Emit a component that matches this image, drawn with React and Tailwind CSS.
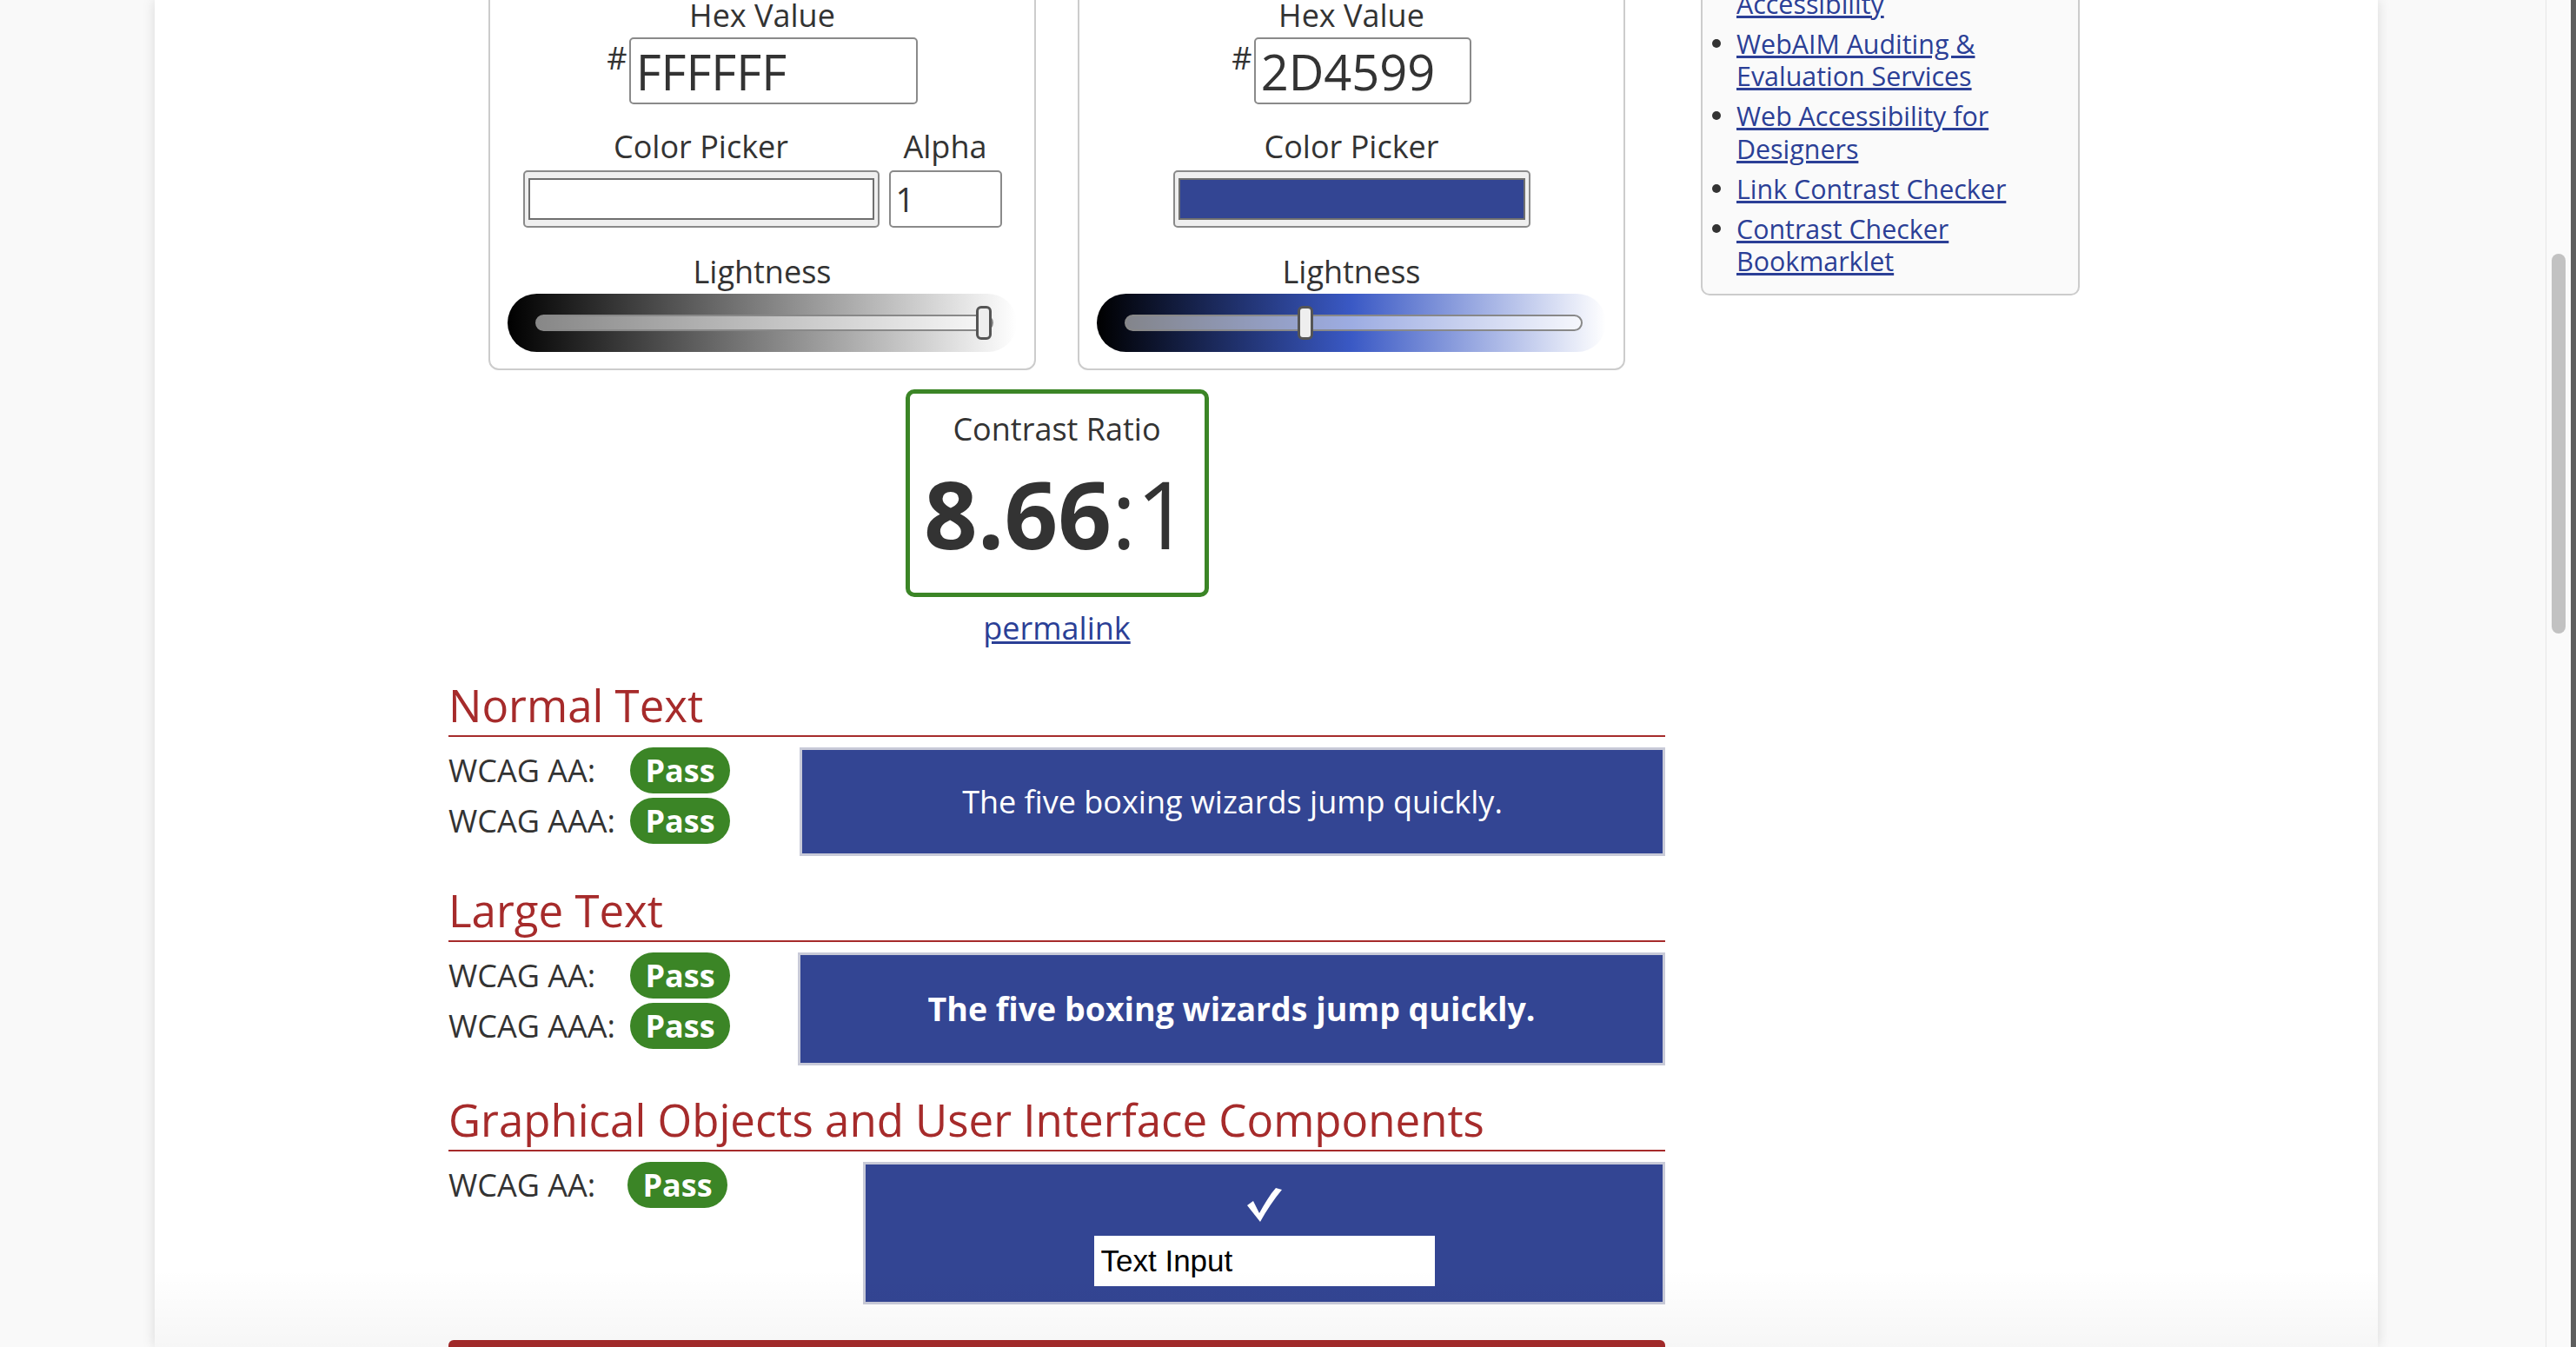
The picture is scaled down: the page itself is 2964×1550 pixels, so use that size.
import React from 'react';

const links = [
  'Contrast and Color Accessibility',
  'WebAIM Auditing & Evaluation Services',
  'Web Accessibility for Designers',
  'Link Contrast Checker',
  'Contrast Checker Bookmarklet',
];

const Slider = ({ gradient, lightness }) => (
  <div className={`relative mt-[1px] h-[67px] w-[586px] rounded-full pl-[32px] pr-[27px] pt-[24px] ${gradient}`}>
    <div className="h-[19px] rounded-full border-2 border-[#888] bg-white/50" />
    <div
      className="absolute top-[14px] h-[39px] w-[18px] rounded-[6px] border-[3px] border-[#555] bg-[#eee]"
      style={{ left: 36 + lightness * 503 }}
    />
  </div>
);

const ColorCard = ({ hex, hexWidth, pickerWidth, swatch, alpha, gradient, lightness }) => (
  <div className="flex w-[630px] flex-col items-center rounded-[12px] border-2 border-[#ccc] bg-white pb-[19px] pt-[22px]">
    <div className="text-[36px] leading-[48px]">Hex Value</div>
    <div className="mt-[1px] flex items-start">
      <span className="text-[36px] leading-[48px]">#</span>
      <input
        readOnly
        value={hex}
        className={`ml-[2px] h-[77px] ${hexWidth} rounded-[5px] border-2 border-[#8a8a8a] bg-white pl-[6px] text-[56px] leading-none text-[#333] outline-none`}
      />
    </div>
    <div className="mt-[25px] flex gap-[11px]">
      <div className="flex flex-col items-center">
        <div className="text-[36px] leading-[48px]">Color Picker</div>
        <div className={`mt-[3px] h-[66px] ${pickerWidth} rounded-[5px] border-2 border-[#8a8a8a] bg-[#efefef] px-[4px] py-[7px]`}>
          <div className={`h-full border-2 border-[#6f6f6f] ${swatch}`} />
        </div>
      </div>
      {alpha && (
        <div className="flex flex-col items-center">
          <div className="text-[36px] leading-[48px]">Alpha</div>
          <input
            readOnly
            value="1"
            className="mt-[3px] h-[66px] w-[130px] rounded-[5px] border-2 border-[#8a8a8a] bg-white pl-[6px] text-[38px] text-[#333] outline-none"
          />
        </div>
      )}
    </div>
    <div className="mt-[27px] text-[36px] leading-[48px]">Lightness</div>
    <Slider gradient={gradient} lightness={lightness} />
  </div>
);

const Badge = () => (
  <span className="h-[53px] w-[115px] rounded-full bg-[#3b8526] text-center text-[36px] font-bold leading-[53px] text-white">
    Pass
  </span>
);

const Section = ({ title, rows, leftWidth, labelWidth, first, children }) => (
  <div className={first ? 'mt-[34px]' : 'mt-[32px]'}>
    <h2 className="border-b-2 border-[#a62b2b] pb-[5px] text-[51px] leading-[60px] text-[#a62b2b]">{title}</h2>
    <div className="mt-[12px] flex">
      <div className={`flex shrink-0 flex-col gap-[5px] ${leftWidth}`}>
        {rows.map((r) => (
          <div key={r} className="flex h-[53px] items-center">
            <span className={`${labelWidth} text-[36px]`}>{r}</span>
            <Badge />
          </div>
        ))}
      </div>
      {children}
    </div>
  </div>
);

export default function App() {
  return (
    <div className="flex h-[1550px] overflow-hidden bg-[#f9f9f9] font-['Open_Sans',sans-serif] text-[#333]">
      <div className="w-[2929px] shrink-0">
        <div className="relative ml-[178px] h-full w-[2558px] overflow-hidden bg-white shadow-[0_0_14px_rgba(0,0,0,0.13)]">
          <div className="-mt-[60px] flex items-start pl-[338px]">
            <main className="w-[1400px] shrink-0 pt-[30px]">
              <div className="flex justify-center gap-[48px]">
                <ColorCard
                  hex="FFFFFF"
                  hexWidth="w-[332px]"
                  pickerWidth="w-[410px]"
                  swatch="bg-white"
                  alpha
                  gradient="bg-[linear-gradient(to_right,#000,#fff)]"
                  lightness={1}
                />
                <ColorCard
                  hex="2D4599"
                  hexWidth="w-[250px]"
                  pickerWidth="w-[411px]"
                  swatch="bg-[#334593]"
                  gradient="bg-[linear-gradient(to_right,#000,#3a59c5,#fff)]"
                  lightness={0.388}
                />
              </div>

              <div className="mx-auto mt-[22px] h-[239px] w-[349px] rounded-[10px] border-[5px] border-[#3b8526] pt-[17px] text-center">
                <div className="text-[36px] leading-[48px]">Contrast Ratio</div>
                <div className="mt-[18px] text-[108px] leading-[110px]">
                  <span className="font-bold">8.66</span>:1
                </div>
              </div>
              <div className="mt-[12px] text-center text-[36px] leading-[48px]">
                <a href="#" className="text-[#2b3f96] underline">permalink</a>
              </div>

              <Section title="Normal Text" rows={['WCAG AA:', 'WCAG AAA:']} leftWidth="w-[404px]" labelWidth="w-[209px]" first>
                <div className="flex h-[125px] flex-1 items-center justify-center border-[3px] border-[#c8cad8] bg-[#334593] text-[36px] text-white">
                  The five boxing wizards jump quickly.
                </div>
              </Section>

              <Section title="Large Text" rows={['WCAG AA:', 'WCAG AAA:']} leftWidth="w-[402px]" labelWidth="w-[209px]">
                <div className="flex h-[130px] flex-1 items-center justify-center border-[3px] border-[#c8cad8] bg-[#334593] text-[37.5px] font-bold text-white">
                  The five boxing wizards jump quickly.
                </div>
              </Section>

              <Section title="Graphical Objects and User Interface Components" rows={['WCAG AA:']} leftWidth="w-[477px]" labelWidth="w-[206px]">
                <div className="flex h-[164px] flex-1 flex-col items-center border-[3px] border-[#c8cad8] bg-[#334593] pt-[26px]">
                  <svg width="42" height="40" viewBox="0 0 42 40" fill="#fff">
                    <path d="M1 21 C4 19 6 17 8 16 L15 30 C21 19 27 9 34 1 L41 3 C32 14 23 27 16 40 Z" />
                  </svg>
                  <input
                    readOnly
                    value="Text Input"
                    className="mt-[16px] h-[58px] w-[392px] bg-white pl-[8px] font-['Liberation_Sans',Arial,sans-serif] text-[35px] text-black outline-none"
                  />
                </div>
              </Section>

              <div className="mt-[41px] h-[30px] rounded-t-[6px] bg-[#a62b2b]" />
            </main>

            <aside className="ml-[41px] w-[436px] shrink-0 rounded-[10px] border-2 border-[#ccc] bg-[#fafafa] pb-[18px] pl-[11px] pr-[33px] pt-[6px]">
              <ul className="flex flex-col gap-[8.5px]">
                {links.map((l) => (
                  <li key={l} className="flex items-start">
                    <span className="mt-[13.4px] h-[10px] w-[10px] shrink-0 rounded-full bg-[#333]" />
                    <a href="#" className="ml-[18px] w-[360px] text-[30.4px] leading-[37.5px] text-[#2b3f96] underline">
                      {l}
                    </a>
                  </li>
                ))}
              </ul>
            </aside>
          </div>
          <div className="pointer-events-none absolute inset-x-0 bottom-0 h-[90px] bg-[linear-gradient(to_bottom,transparent,rgba(0,0,0,0.035))]" />
        </div>
      </div>
      <div className="w-[29px] shrink-0 border-l border-[#e6e6e6] bg-[#fafafa] pl-[6px] pt-[292px]">
        <div className="h-[437px] w-[16px] rounded-full bg-[#c2c2c2]" />
      </div>
      <div className="w-[6px] shrink-0 bg-[#5e5e5e]" />
    </div>
  );
}
